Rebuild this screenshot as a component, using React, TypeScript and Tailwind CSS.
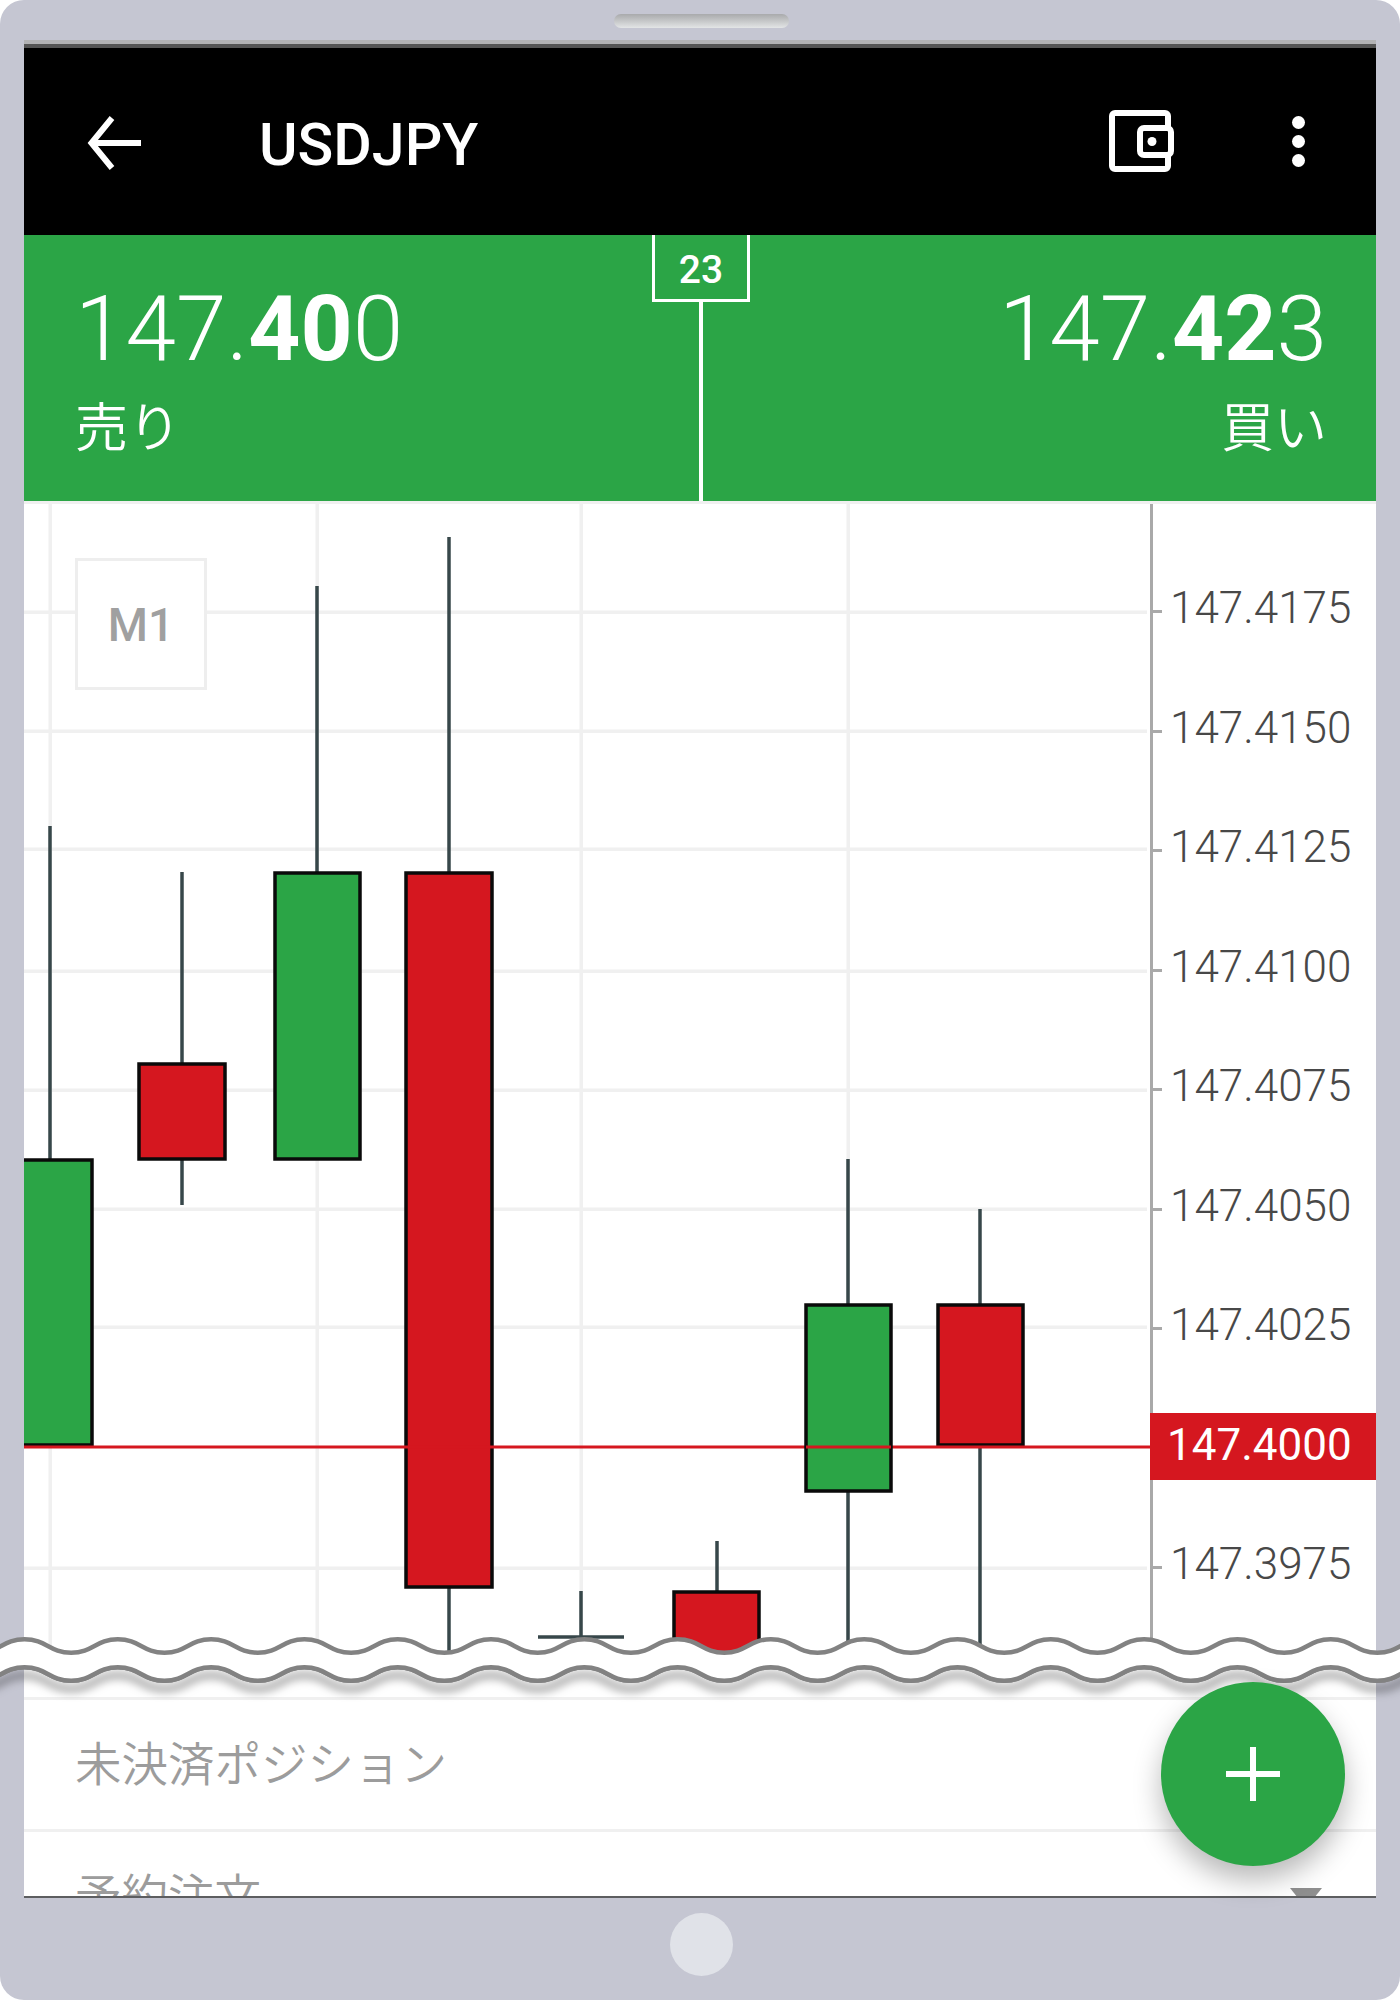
const GREEN = "#2ba546";
const RED = "#d5171f";
const WICK = "#37474a";

const gridY = [612, 731, 849, 971, 1090, 1209, 1327, 1568];
const gridX = [50, 317, 581, 848];
const axisLabels = ["147.4175", "147.4150", "147.4125", "147.4100", "147.4075", "147.4050", "147.4025", "", "147.3975"];

// x = left edge of body, w = body width, hi/lo = wick ends, top/bottom = body
const candles = [
  { x: 10, w: 83, cx: 50, hi: 826, lo: 1446, top: 1159, bottom: 1445, fill: GREEN },
  { x: 138, w: 88, cx: 182, hi: 872, lo: 1205, top: 1063, bottom: 1159, fill: RED },
  { x: 274, w: 87, cx: 317, hi: 586, lo: 1159, top: 872, bottom: 1159, fill: GREEN },
  { x: 405, w: 88, cx: 449, hi: 537, lo: 1670, top: 872, bottom: 1587, fill: RED },
  { x: 673, w: 87, cx: 717, hi: 1541, lo: 1591, top: 1591, bottom: 1700, fill: RED },
  { x: 937, w: 87, cx: 980, hi: 1209, lo: 1670, top: 1304, bottom: 1445, fill: RED },
];

function wavePoints(crest: number, trough: number, reverse = false) {
  const period = 93.3;
  const half = period / 2;
  const pull = 22;
  const pts: string[] = [];
  const start = 24.5 - period;
  const steps = 34;
  const at = (i: number) => ({ x: start + i * half, y: i % 2 === 0 ? crest : trough });
  if (!reverse) {
    pts.push(`M${at(0).x} ${at(0).y}`);
    for (let i = 1; i <= steps; i++) {
      const a = at(i - 1);
      const b = at(i);
      pts.push(`C${a.x + pull} ${a.y} ${b.x - pull} ${b.y} ${b.x} ${b.y}`);
    }
  } else {
    pts.push(`L${at(steps).x} ${at(steps).y}`);
    for (let i = steps - 1; i >= 0; i--) {
      const a = at(i + 1);
      const b = at(i);
      pts.push(`C${a.x - pull} ${a.y} ${b.x + pull} ${b.y} ${b.x} ${b.y}`);
    }
    pts.push("Z");
  }
  return pts.join(" ");
}

function Chart() {
  return (
    <svg width="1126" height="1157" viewBox="24 504 1126 1157" className="block shrink-0">
      {gridY.map((y) => (
        <rect key={y} x="24" y={y - 1.5} width="1123" height="3.5" fill="#f0f0f0" />
      ))}
      {gridX.map((x) => (
        <rect key={x} x={x - 1.5} y="504" width="3.5" height="1157" fill="#f0f0f0" />
      ))}
      {candles.map((c) => (
        <g key={c.cx}>
          <line x1={c.cx} x2={c.cx} y1={c.hi} y2={c.lo} stroke={WICK} strokeWidth="3.5" />
          <rect x={c.x + 1} y={c.top + 1} width={c.w - 2} height={c.bottom - c.top - 1} fill={c.fill} stroke="#0a0a0a" strokeWidth="3.5" />
        </g>
      ))}
      {/* doji */}
      <line x1="581" x2="581" y1="1591" y2="1637" stroke={WICK} strokeWidth="3.5" />
      <line x1="538" x2="624" y1="1637" y2="1637" stroke={WICK} strokeWidth="3.5" />
      {/* current price line sits over the older candles, green one drawn after */}
      <rect x="24" y="1445.5" width="1128" height="3" fill={RED} />
      <line x1="848" x2="848" y1="1159" y2="1670" stroke={WICK} strokeWidth="3.5" />
      <rect x="806" y="1305" width="85" height="186" fill={GREEN} stroke="#0a0a0a" strokeWidth="3.5" />
      <rect x="806" y="1445.5" width="85" height="3" fill={RED} />
    </svg>
  );
}

function Axis() {
  return (
    <div className="relative flex-1 border-l-[3px] border-[#a9a9a9] pt-[48px]">
      {axisLabels.map((label, i) => (
        <div key={i} className="flex h-[119.5px] items-center">
          {label && (
            <>
              <span className="h-[3px] w-[9px] bg-[#a9a9a9]" />
              <span className="mb-[7px] ml-[8px] text-[44px] leading-none font-light text-[#484848]">{label}</span>
            </>
          )}
        </div>
      ))}
      <div className="absolute top-[909px] left-[-3px] flex h-[67px] w-[229px] items-center bg-[#d5171f] pb-[3px] pl-[17px] text-[44px] leading-none text-white">
        147.4000
      </div>
    </div>
  );
}

function Price({ head, bold, tail }: { head: string; bold: string; tail: string }) {
  return (
    <div className="text-[91px] leading-none font-light text-white">
      {head}
      <span className="font-bold">{bold}</span>
      {tail}
    </div>
  );
}

export default function App() {
  return (
    <div className="relative flex h-[2000px] w-[1400px] flex-col overflow-hidden rounded-[24px] bg-[#c5c6d2] font-[Roboto,'Noto_Sans_CJK_JP',sans-serif]">
      <div className="flex h-[40px] shrink-0 justify-center pt-[14px] pl-[2px]">
        <div className="h-[14px] w-[175px] rounded-full bg-gradient-to-b from-[#a9aaac] to-[#e3e5e6]" />
      </div>

      <div className="mx-[24px] flex h-[1858px] shrink-0 flex-col overflow-hidden border-b-[2px] border-[#5d5e60] bg-white">
        <div className="h-[8px] shrink-0 border-t-[4px] border-[#b3b3b5] bg-[#555555]" />

        <header className="flex h-[187px] shrink-0 items-center bg-black text-white">
          <svg width="56" height="56" viewBox="0 0 56 56" className="mt-[2px] ml-[62px]" fill="none" stroke="white" strokeWidth="6">
            <path d="M55 28H6" />
            <path d="M26 3 5.5 28 26 53" />
          </svg>
          <h1 className="mt-[6px] ml-[117px] flex-1 text-[59px] leading-none font-medium">USDJPY</h1>
          <svg width="66" height="62" viewBox="0 0 66 62" className="mt-[-2px]" fill="none" stroke="white" strokeWidth="6">
            <rect x="3" y="3" width="56" height="56" rx="3" />
            <rect x="31" y="18" width="31" height="27" rx="4" fill="black" />
            <circle cx="43" cy="31.5" r="4.5" fill="white" stroke="none" />
          </svg>
          <div className="mr-[71px] ml-[117px] flex flex-col gap-[6px]">
            <span className="h-[13px] w-[13px] rounded-full bg-white" />
            <span className="h-[13px] w-[13px] rounded-full bg-white" />
            <span className="h-[13px] w-[13px] rounded-full bg-white" />
          </div>
        </header>

        <section className="flex h-[266px] shrink-0 bg-[#2ba546] text-white">
          <div className="flex-1 pt-[49px] pl-[51px]">
            <Price head="147." bold="40" tail="0" />
            <div className="mt-[28px] text-[53px] leading-none font-[350]">売り</div>
          </div>
          <div className="flex w-[98px] shrink-0 flex-col items-center">
            <div className="flex h-[67px] w-full items-center justify-center border-x-[3px] border-b-[3px] border-white pt-[6px] text-[39px] leading-none font-medium">
              23
            </div>
            <div className="w-[4px] flex-1 bg-white" />
          </div>
          <div className="flex flex-1 flex-col items-end pt-[49px] pr-[49px]">
            <Price head="147." bold="42" tail="3" />
            <div className="mt-[28px] text-[53px] leading-none font-[350]">買い</div>
          </div>
        </section>

        <section className="relative flex h-[1160px] shrink-0 overflow-hidden border-t-[3px] border-[#f0f0f0]">
          <Chart />
          <Axis />
          <div className="absolute top-[54px] left-[51px] flex h-[132px] w-[132px] items-center justify-center border-[3px] border-[#eeeeee] bg-white pt-[2px] text-[46px] font-medium text-[#a0a0a0]">
            M1
          </div>
        </section>

        <div className="h-[36px] shrink-0 bg-white" />

        <div className="flex h-[135px] shrink-0 items-center border-t-[3px] border-b-[3px] border-[#f0f0f0] pl-[51px] text-[46.5px] leading-none font-[350] text-[#9c9c9c]">
          <span className="mt-[2px]">未決済ポジション</span>
        </div>
        <div className="flex flex-1 items-start justify-between pt-[42px] pr-[54px] pl-[51px] text-[46.5px] leading-none font-[350] text-[#9c9c9c]">
          <span>予約注文</span>
          <span className="mt-[14px] h-0 w-0 border-x-[16px] border-t-[20px] border-x-transparent border-t-[#8f8f8f]" />
        </div>
      </div>

      <div className="flex flex-1 items-center justify-center pb-[10px] pl-[2px]">
        <div className="h-[63px] w-[63px] rounded-full bg-[#e0e2e8]" />
      </div>

      {/* torn-page break across the chart */}
      <svg width="1400" height="90" viewBox="0 1630 1400 90" className="absolute top-[1630px] left-0 overflow-visible" fill="none">
        <g className="drop-shadow-[0_8px_5px_rgba(0,0,0,0.55)]">
          <path d={wavePoints(1667.25, 1680.75)} stroke="#828282" strokeWidth="4.5" />
        </g>
        <path d={`${wavePoints(1639.25, 1652.75)} ${wavePoints(1667.25, 1680.75, true)}`} fill="white" />
        <path d={wavePoints(1639.25, 1652.75)} stroke="#828282" strokeWidth="4.5" />
        <path d={wavePoints(1667.25, 1680.75)} stroke="#828282" strokeWidth="4.5" />
      </svg>

      <button
        type="button"
        className="absolute top-[1682px] left-[1161px] flex h-[184px] w-[184px] items-center justify-center rounded-full bg-[#2ba546] shadow-[0_14px_28px_rgba(0,0,0,0.28)]"
      >
        <svg width="54" height="54" viewBox="0 0 54 54" stroke="white" strokeWidth="6">
          <path d="M0 27H54M27 0V54" />
        </svg>
      </button>
    </div>
  );
}
